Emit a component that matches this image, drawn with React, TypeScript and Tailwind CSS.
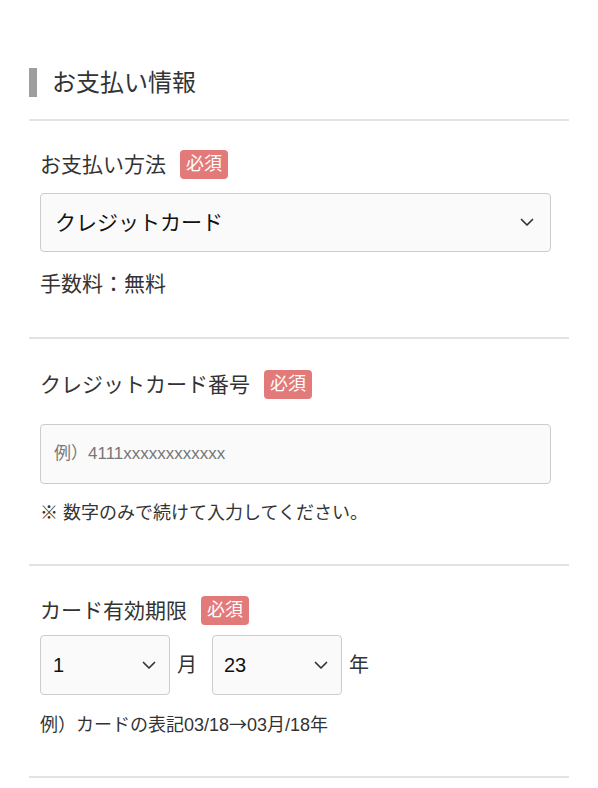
import React from "react";

const font = { fontFamily: '"Liberation Sans", "Noto Sans CJK JP", sans-serif' };

function Chevron() {
  return (
    <svg width="14" height="9" viewBox="0 0 14 9" fill="none">
      <path d="M1.5 1.5 L7 7 L12.5 1.5" stroke="#333" strokeWidth="1.7" strokeLinecap="round" strokeLinejoin="round" />
    </svg>
  );
}

function Badge() {
  return (
    <span className="ml-[14px] inline-flex h-[29px] w-[48px] items-center justify-center rounded-[4px] bg-[#e37a7a] text-[18px] text-white">
      必須
    </span>
  );
}

function Label({ text }: { text: string }) {
  return (
    <div className="flex h-[29px] items-center">
      <span className="text-[21px] text-[#333]">{text}</span>
      <Badge />
    </div>
  );
}

export default function App() {
  return (
    <div className="min-h-[788px] bg-white" style={font}>
      <div className="mx-auto w-[540px]">
        <div className="pt-[68px]">
          <div className="flex h-[29px] items-center">
            <div className="h-[29px] w-[8px] bg-[#9e9e9e]" />
            <span className="ml-[15px] text-[24px] leading-none text-[#333]">お支払い情報</span>
          </div>
        </div>
        <div className="mt-[22px] h-[2px] bg-[#e3e3e3]" />

        <div className="pl-[11px] pr-[18px] pt-[29px] pb-[41px]">
          <Label text="お支払い方法" />
          <div className="mt-[14px] flex h-[59px] items-center justify-between rounded-[4px] border border-[#cccccc] bg-[#fafafa] pl-[14px] pr-[16px]">
            <span className="text-[21px] text-[#111]">クレジットカード</span>
            <Chevron />
          </div>
          <div className="mt-[20px] text-[21px] leading-[24px] text-[#333]">手数料：無料</div>
        </div>
        <div className="h-[2px] bg-[#e3e3e3]" />

        <div className="pl-[11px] pr-[18px] pt-[31px] pb-[39px]">
          <Label text="クレジットカード番号" />
          <div className="mt-[25px] flex h-[60px] items-center rounded-[4px] border border-[#cccccc] bg-[#fafafa] pl-[13px]">
            <span className="text-[17px] text-[#777]">例）4111xxxxxxxxxxxx</span>
          </div>
          <div className="mt-[17px] text-[18px] leading-[24px] text-[#333]">※ 数字のみで続けて入力してください。</div>
        </div>
        <div className="h-[2px] bg-[#e3e3e3]" />

        <div className="pl-[11px] pr-[18px] pt-[30px] pb-[40px]">
          <Label text="カード有効期限" />
          <div className="mt-[10px] flex items-center">
            <div className="flex h-[60px] w-[130px] items-center justify-between rounded-[4px] border border-[#cccccc] bg-[#fafafa] pl-[12px] pr-[13px]">
              <span className="text-[20px] text-[#111]">1</span>
              <Chevron />
            </div>
            <span className="ml-[7px] mr-[15px] text-[20px] text-[#333]">月</span>
            <div className="flex h-[60px] w-[130px] items-center justify-between rounded-[4px] border border-[#cccccc] bg-[#fafafa] pl-[11px] pr-[13px]">
              <span className="text-[20px] text-[#111]">23</span>
              <Chevron />
            </div>
            <span className="ml-[7px] text-[20px] text-[#333]">年</span>
          </div>
          <div className="mt-[17px] text-[18px] leading-[22px] text-[#333]">
            例）カードの表記03/18<span className="font-['Noto_Sans_CJK_JP',sans-serif]">→</span>03月/18年
          </div>
        </div>
        <div className="h-[2px] bg-[#e3e3e3]" />
      </div>
    </div>
  );
}
